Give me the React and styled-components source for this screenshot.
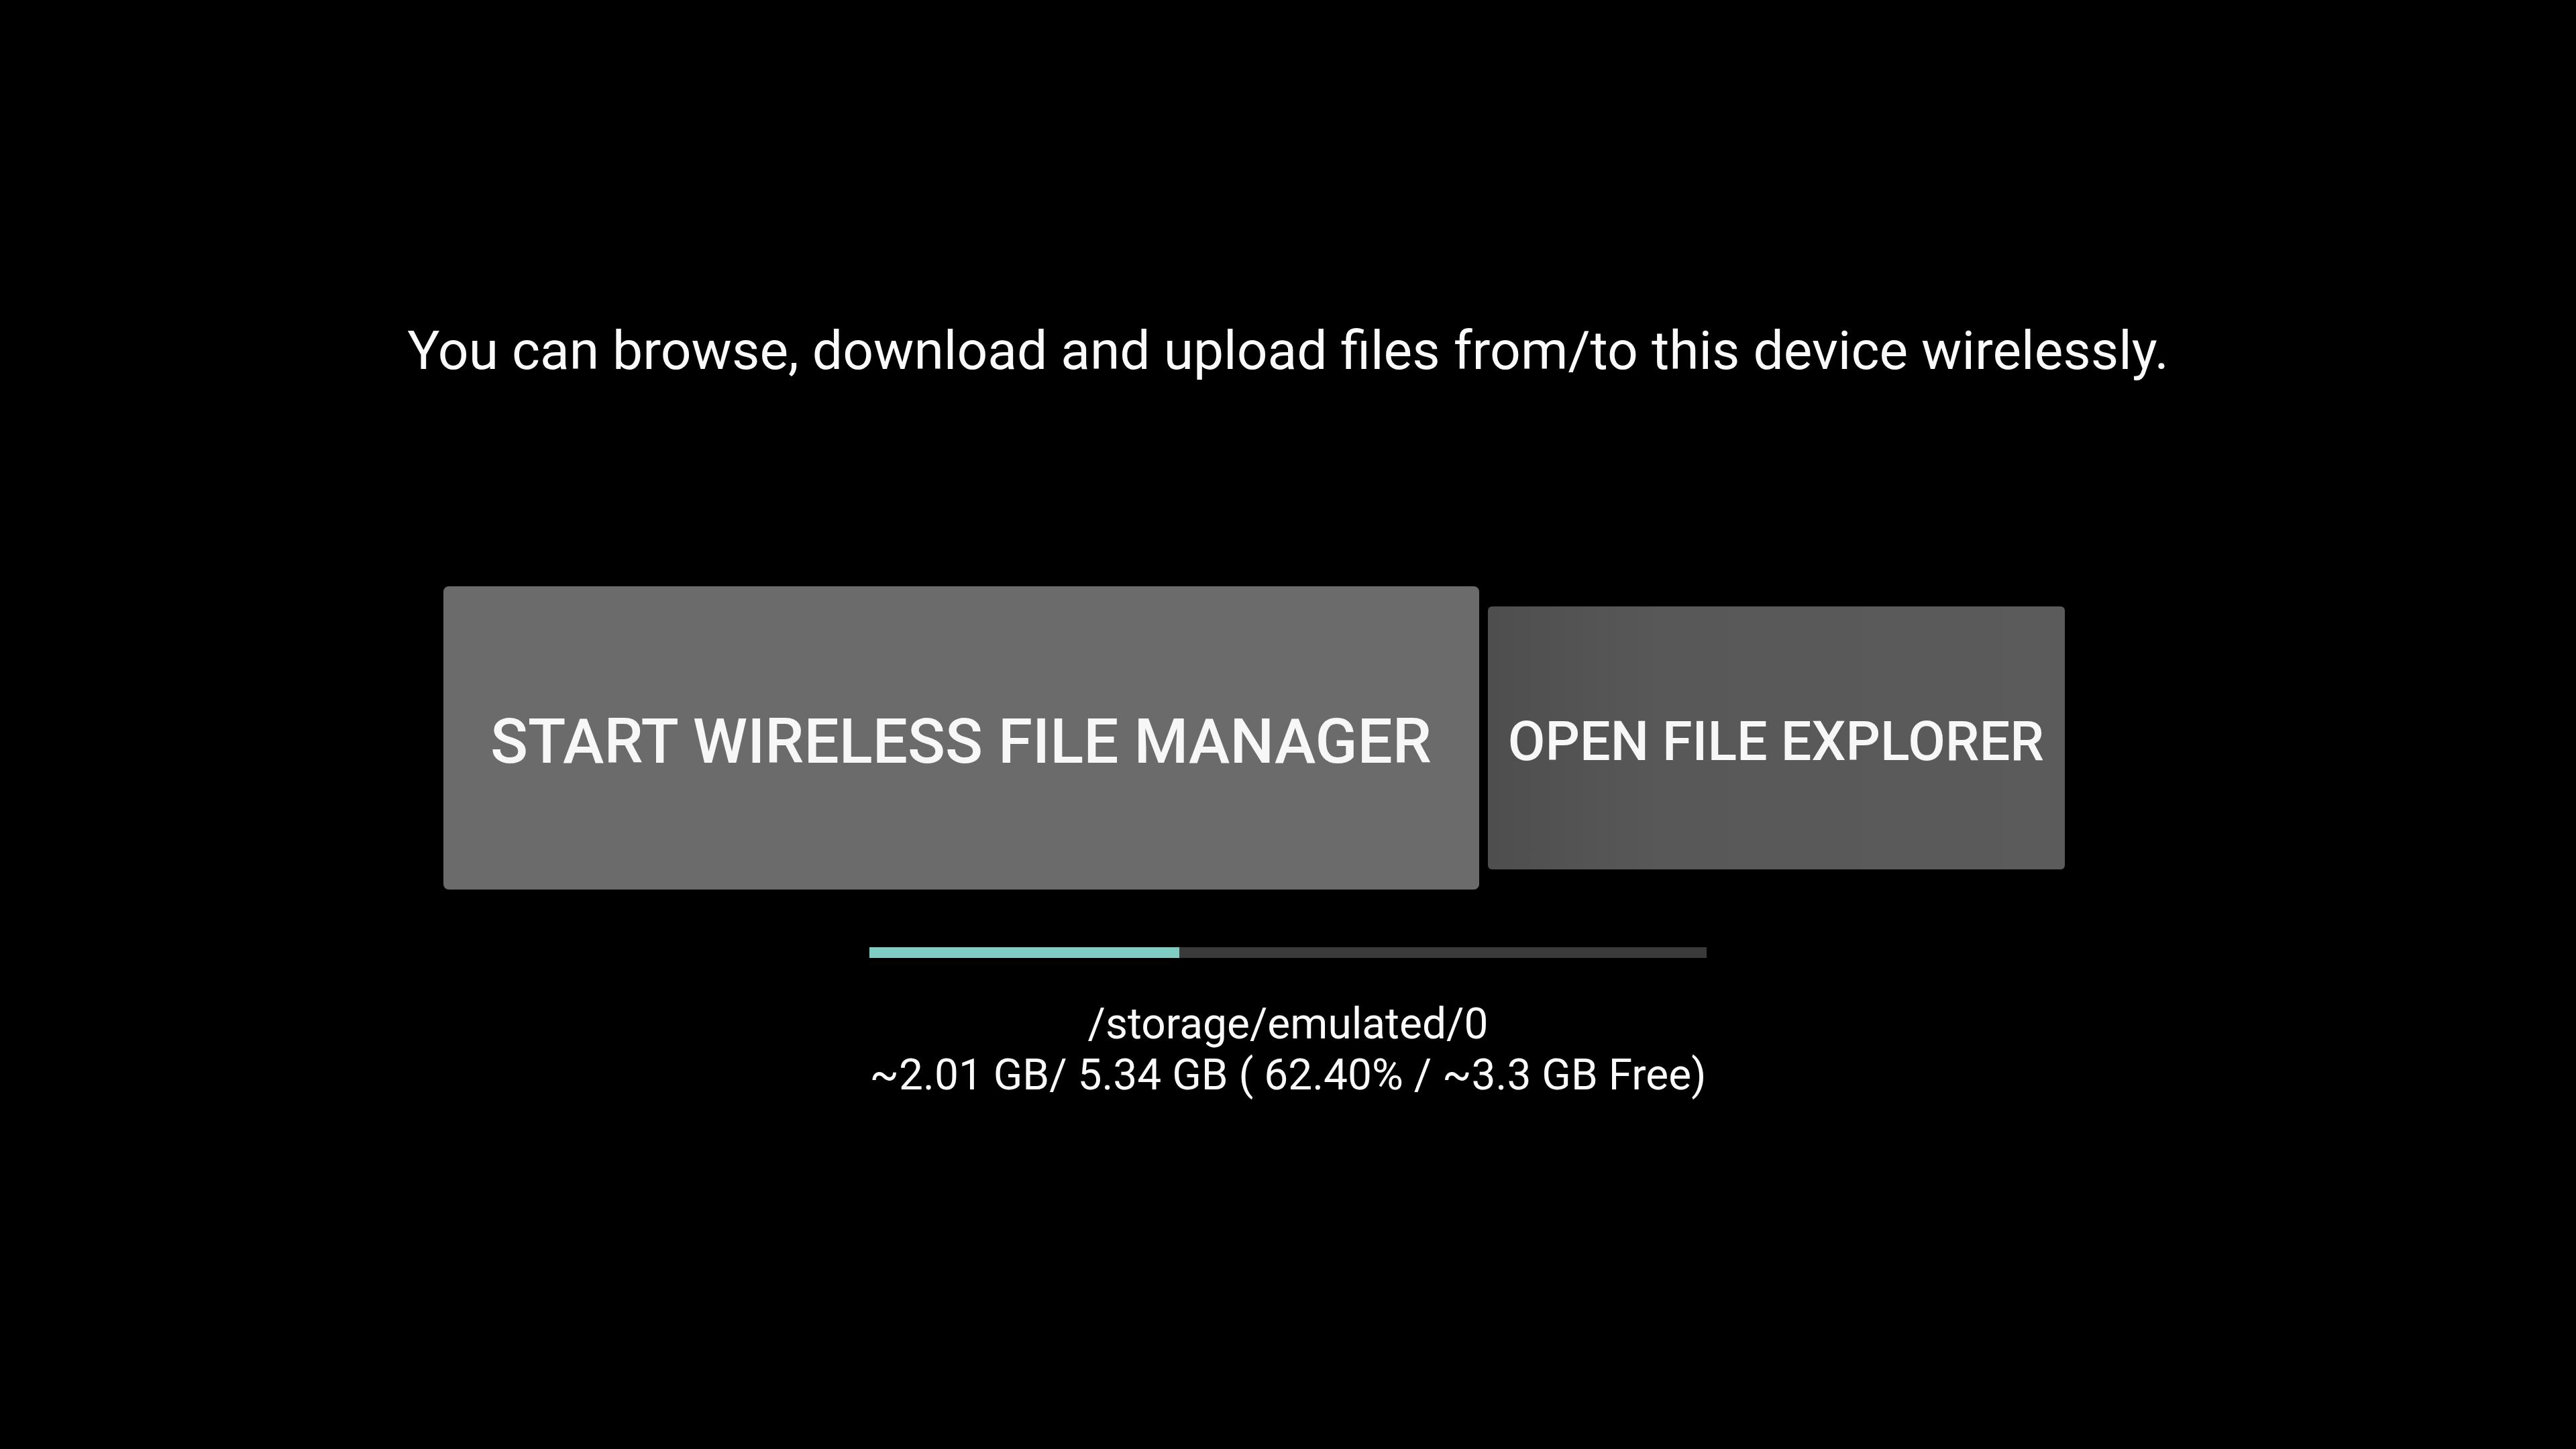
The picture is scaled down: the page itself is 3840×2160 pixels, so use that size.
import React from 'react';
import styled, { createGlobalStyle } from 'styled-components';

const GlobalStyle = createGlobalStyle`
  html, body {
    margin: 0;
    padding: 0;
    background: #000;
  }
  body {
    font-family: Roboto, "Liberation Sans", sans-serif;
    color: #fff;
  }
`;

const Screen = styled.main`
  width: 3840px;
  height: 2160px;
  background: #000;
  display: flex;
  flex-direction: column;
  align-items: center;
  overflow: hidden;
`;

const Intro = styled.p`
  margin: 476px 0 0;
  font-size: 80.4px;
  line-height: 94px;
  font-weight: 400;
  color: #fafafa;
  white-space: nowrap;
`;

const ButtonRow = styled.div`
  margin-top: 304px;
  display: flex;
  align-items: center;
  gap: 13px;
  padding-right: 102px;
`;

const ActionButton = styled.button`
  width: ${({ $focused }) => ($focused ? '1544px' : '860px')};
  height: ${({ $focused }) => ($focused ? '452px' : '392px')};
  border: none;
  border-radius: ${({ $focused }) => ($focused ? '8px' : '6px')};
  background: ${({ $focused }) =>
    $focused
      ? '#6b6b6c'
      : 'linear-gradient(90deg, #4e4e4f 0%, #585859 30%, #5b5b5c 100%)'};
  color: #f7f7f7;
  font-family: Roboto, "Liberation Sans", sans-serif;
  font-weight: 500;
  font-size: ${({ $focused }) => ($focused ? '92.5px' : '80.8px')};
  text-transform: uppercase;
  display: flex;
  align-items: center;
  justify-content: center;
  padding: 10px 0 0;
  cursor: pointer;
`;

const Storage = styled.section`
  margin-top: 86px;
  display: flex;
  flex-direction: column;
  align-items: center;
`;

const Track = styled.div`
  width: 1248px;
  height: 16px;
  background: #3a3a3a;
`;

const Fill = styled.div`
  height: 100%;
  background: #80cbc4;
`;

const StorageText = styled.div`
  margin-top: 61px;
  font-size: 64px;
  line-height: 76px;
  text-align: center;
  color: #fafafa;
  white-space: nowrap;
`;

const storage = {
  path: '/storage/emulated/0',
  used: 2.01,
  total: 5.34,
  free: 3.3,
};

export default function App() {
  const pct = Math.floor((storage.used / storage.total) * 100);
  return (
    <>
      <GlobalStyle />
      <Screen>
        <Intro>You can browse, download and upload files from/to this device wirelessly.</Intro>
        <ButtonRow>
          <ActionButton $focused>Start Wireless File Manager</ActionButton>
          <ActionButton>Open File Explorer</ActionButton>
        </ButtonRow>
        <Storage>
          <Track>
            <Fill style={{ width: `${pct}%` }} />
          </Track>
          <StorageText>
            {storage.path}
            <br />
            ~{storage.used.toFixed(2)} GB/ {storage.total.toFixed(2)} GB ( 62.40% / ~{storage.free} GB Free)
          </StorageText>
        </Storage>
      </Screen>
    </>
  );
}
